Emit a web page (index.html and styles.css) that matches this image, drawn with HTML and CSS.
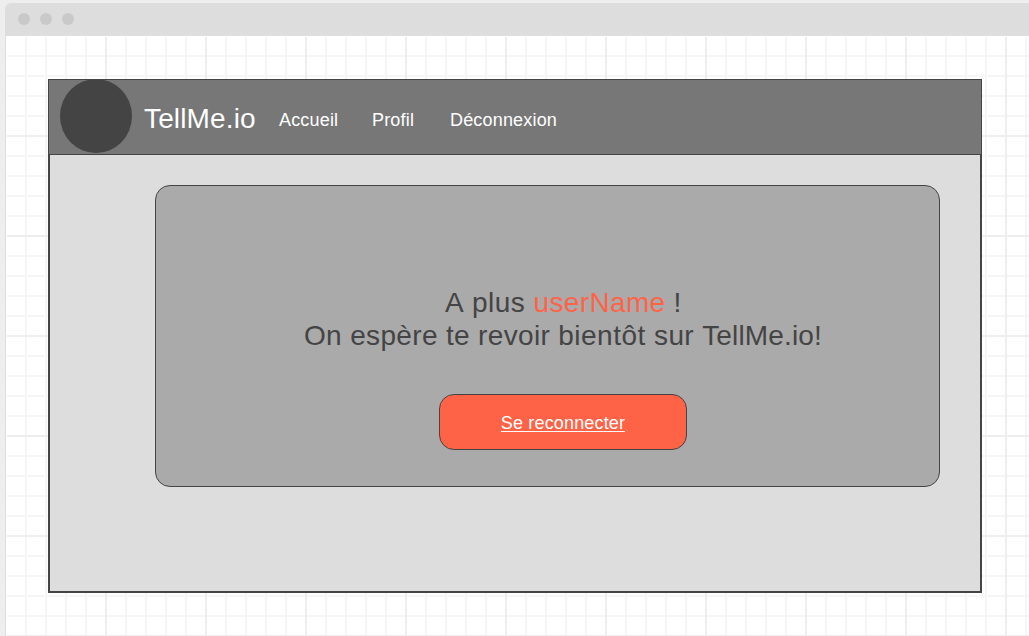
FILE: index.html
```html
<!DOCTYPE html>
<html lang="fr">
<head>
<meta charset="utf-8">
<title>TellMe.io</title>
<link rel="stylesheet" href="styles.css">
</head>
<body>
<div class="window">
  <div class="titlebar"><i class="dot"></i><i class="dot"></i><i class="dot"></i></div>
  <div class="canvas">
    <div class="page">
      <header class="navbar">
        <div class="logo"></div>
        <span class="brand">TellMe.io</span>
        <nav class="links"><a class="home">Accueil</a><a class="profile">Profil</a><a class="logout">Déconnexion</a></nav>
      </header>
      <main class="content">
        <section class="card">
          <p class="message first"><span class="widest">A </span><span class="wide">plus </span><span class="user">userName</span> !</p>
          <p class="message second">On espère te revoir <span class="wide">bientôt </span>sur <span class="name">TellMe.io!</span></p>
          <a class="button"><span class="label">Se reconnecter</span></a>
        </section>
      </main>
    </div>
  </div>
</div>
</body>
</html>
```
FILE: styles.css
```css
* { box-sizing: border-box; }
body {
  margin: 0;
  height: 636px;
  overflow: hidden;
  background: #eee;
  padding: 3px 0 0 5px;
  font-family: "Liberation Sans", Arial, sans-serif;
}
.window { height: 633px; display: flex; flex-direction: column; }
.titlebar {
  height: 33px;
  flex: none;
  display: flex;
  align-items: center;
  gap: 10px;
  padding: 0 0 1px 13px;
  background: #ddd;
  border-top-left-radius: 6px;
}
.dot { width: 12px; height: 12px; border-radius: 50%; background: #c9c9c9; }
.canvas {
  flex: 1;
  min-height: 0;
  border-left: 1px solid #ddd;
  padding: 43px 0 0 42px;
  background-color: #fff;
  background-image:
    linear-gradient(#fff, #fff),
    linear-gradient(#fff, #fff),
    linear-gradient(90deg, #eee 2px, transparent 2px),
    linear-gradient(#eee 2px, transparent 2px),
    linear-gradient(90deg, #f6f6f6 2px, transparent 2px),
    linear-gradient(#f6f6f6 2px, transparent 2px);
  background-size: 100% 1px, 1px 100%, 100px 100px, 100px 100px, 20px 20px, 20px 20px;
  background-position: 0 0, 0 0, 99px 0, 0 99px, 19px 0, 0 19px;
  background-repeat: no-repeat, no-repeat, repeat, repeat, repeat, repeat;
}
.page {
  width: 934px;
  height: 514px;
  display: flex;
  flex-direction: column;
  background: #ddd;
}
.navbar {
  height: 76px;
  flex: none;
  display: flex;
  border: 1px solid #444;
  background: #777;
  color: #fff;
  padding-left: 11px;
}
.logo { width: 72px; height: 74px; margin-top: -1px; border-radius: 50%; background: #444; }
.brand { margin: 22px 0 0 12px; width: 135px; font-size: 28px; line-height: 33px; letter-spacing: 0.15px; }
.links { display: flex; margin-top: 29px; font-size: 18px; line-height: 22px; letter-spacing: 0.18px; }
.home { width: 93px; }
.profile { width: 78px; }
.content {
  flex: 1;
  border: 2px solid #444;
  border-top: 0;
  padding: 30px 0 0 105px;
}
.card {
  width: 785px;
  height: 302px;
  border: 1px solid #444;
  border-radius: 15px;
  background: #aaa;
  color: #444;
  padding: 100px 0 0 148px;
}
.message { margin: 0; font-size: 28px; line-height: 33px; letter-spacing: 0.34px; white-space: nowrap; }
.first { padding-left: 141px; }
.widest { letter-spacing: 1px; }
.wide { letter-spacing: 0.5px; }
.name { letter-spacing: 0.15px; }
.user { color: tomato; }
.button {
  display: flex;
  justify-content: center;
  width: 248px;
  height: 56px;
  margin: 42px 0 0 135px;
  padding-top: 17px;
  border: 1px solid #444;
  border-radius: 15px;
  background: tomato;
  color: #fff;
  font-size: 18px;
  line-height: 22px;
  letter-spacing: 0.16px;
}
.label { text-decoration: underline 1px; text-decoration-skip-ink: none; text-underline-offset: 2px; }
```
